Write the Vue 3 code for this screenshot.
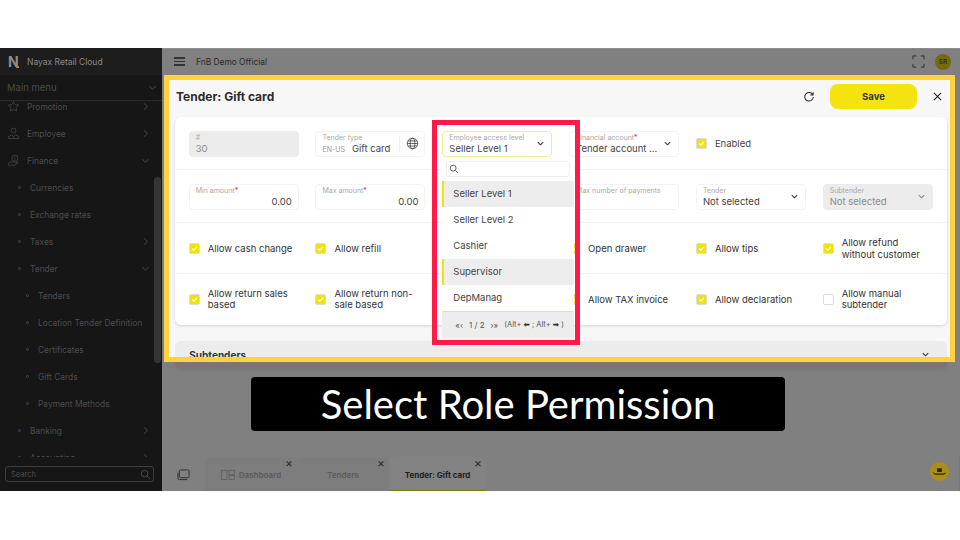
<script setup>
const menu = [
  { label: 'Promotion', level: 0, icon: 'star', arrow: 'right' },
  { label: 'Employee', level: 0, icon: 'person', arrow: 'right' },
  { label: 'Finance', level: 0, icon: 'coin', arrow: 'down' },
  { label: 'Currencies', level: 1 },
  { label: 'Exchange rates', level: 1 },
  { label: 'Taxes', level: 1, arrow: 'right' },
  { label: 'Tender', level: 1, arrow: 'down' },
  { label: 'Tenders', level: 2 },
  { label: 'Location Tender Definition', level: 2 },
  { label: 'Certificates', level: 2 },
  { label: 'Gift Cards', level: 2 },
  { label: 'Payment Methods', level: 2 },
  { label: 'Banking', level: 1, arrow: 'right' },
  { label: 'Accounting', level: 1, arrow: 'right' },
]
const roles = [
  { label: 'Seller Level 1', on: true },
  { label: 'Seller Level 2', on: false },
  { label: 'Cashier', on: false },
  { label: 'Supervisor', on: true },
  { label: 'DepManag', on: false },
]
const rowThree = [
  { label: 'Allow cash change', checked: true },
  { label: 'Allow refill', checked: true },
  null,
  { label: 'Open drawer', checked: true },
  { label: 'Allow tips', checked: true },
  { label: 'Allow refund without customer', checked: true },
]
const rowFour = [
  { label: 'Allow return sales based', checked: true },
  { label: 'Allow return non-sale based', checked: true },
  null,
  { label: 'Allow TAX invoice', checked: true },
  { label: 'Allow declaration', checked: true },
  { label: 'Allow manual subtender', checked: false },
]
</script>

<template>
  <div class="page">
    <div class="app">
      <aside class="sidebar">
        <div class="brand">
          <span class="logo">N<i class="logo-dot"></i></span>
          <span class="brand-name">Nayax Retail Cloud</span>
        </div>
        <div class="menu-head">
          <span>Main menu</span>
          <svg class="chev-side" viewBox="0 0 10 10"><path d="M1.5 3.5 5 7l3.5-3.5" /></svg>
        </div>
        <nav class="menu">
          <div class="menu-list">
            <div v-for="m in menu" :key="m.label" class="menu-item" :class="'lvl' + m.level">
              <svg v-if="m.icon === 'star'" class="menu-icon" viewBox="0 0 14 14"><path d="M7 1.5 8.7 5l3.8.5-2.8 2.6.7 3.8L7 10.1l-3.4 1.8.7-3.8L1.5 5.500 5.300 5z" /></svg>
              <svg v-else-if="m.icon === 'person'" class="menu-icon" viewBox="0 0 14 14"><circle cx="7" cy="3.800" r="2.600" /><path d="M1.500 12.500V10.500L5 8.500l2 2 2-2 3.500 2v2zM7 10.500v2" /></svg>
              <svg v-else-if="m.icon === 'coin'" class="menu-icon" viewBox="0 0 14 14"><circle cx="8.500" cy="4.500" r="3.300" /><path d="M1 10.500 4 8.500h3l2 1 3-1-3 3.500H4l-1.500 1zM8.500 3v3" /></svg>
              <i v-if="m.level > 0" class="menu-dot"></i>
              <span class="menu-label">{{ m.label }}</span>
              <svg v-if="m.arrow === 'right'" class="chev-side end" viewBox="0 0 10 10"><path d="M3.500 1.500 7 5 3.500 8.500" /></svg>
              <svg v-if="m.arrow === 'down'" class="chev-side end" viewBox="0 0 10 10"><path d="M1.500 3.500 5 7l3.500-3.500" /></svg>
            </div>
          </div>
        </nav>
        <div class="side-search">
          <span>Search</span>
          <svg viewBox="0 0 12 12"><circle cx="5" cy="5" r="3.600" /><path d="m7.700 7.700 3.300 3.300" /></svg>
        </div>
        <div class="side-scroll"></div>
      </aside>

      <main class="main">
        <header class="topbar">
          <div class="burger"><i></i><i></i><i></i></div>
          <span class="org">FnB Demo Official</span>
          <svg class="full" viewBox="0 0 14 14"><path d="M1 4.500V1h3.500M9.500 1H13v3.500M13 9.500V13H9.500M4.500 13H1V9.500" /></svg>
          <span class="avatar">SR</span>
        </header>
        <div class="workspace"></div>
        <footer class="tabs">
          <svg class="stack" viewBox="0 0 14 14"><rect x="2.500" y="2" width="10.500" height="8.500" rx="1.500" /><path d="M1 5v6c0 1 .5 1.500 1.500 1.500H11" /></svg>
          <div class="tab">
            <svg class="dash" viewBox="0 0 14 10"><rect x=".5" y=".5" width="5.500" height="9" /><rect x="8" y=".5" width="5.500" height="4" /><rect x="8" y="5.500" width="5.500" height="4" /></svg>
            <span>Dashboard</span><b class="tab-x">×</b>
          </div>
          <div class="tab"><span>Tenders</span><b class="tab-x">×</b></div>
          <div class="tab active"><span>Tender: Gift card</span><b class="tab-x">×</b></div>
          <div class="tabs-end">
            <span class="hat">
              <svg viewBox="0 0 20 20"><path d="M7.500 10.500V6.500h5v4zM3.500 10.500c1 2 3 1.500 4 1.500h5c1 0 3 .5 4-1.500.5 2-2 3-4 3h-5c-2 0-4.500-1-4-3z" /></svg>
            </span>
          </div>
        </footer>

        <div class="modal-tail"></div>
        <section class="modal">
          <div class="modal-head">
            <h1>Tender: Gift card</h1>
            <svg class="refresh" viewBox="0 0 14 14"><path d="M11.500 4.500A5 5 0 1 0 12 7M11.800 1.500v3.200H8.600" /></svg>
            <button class="save" type="button">Save</button>
            <svg class="close" viewBox="0 0 10 10"><path d="m1 1 8 8M9 1 1 9" /></svg>
          </div>

          <div class="card">
            <div class="row r1">
              <div class="field disabled"><label>#</label><div class="val">30</div></div>
              <div class="field">
                <label>Tender type</label>
                <div class="val"><small>EN-US</small>Gift card</div>
                <div class="globe-wrap">
                  <svg class="globe" viewBox="0 0 14 14"><circle cx="7" cy="7" r="5.700" /><ellipse cx="7" cy="7" rx="2.500" ry="5.700" /><path d="M1.300 7h11.400M2 4.300h10M2 9.700h10" /></svg>
                </div>
              </div>
              <div class="field focus">
                <label>Employee access level</label>
                <div class="val">Seller Level 1</div>
                <svg class="chev" viewBox="0 0 10 10"><path d="M2 3.500 5 6.500l3-3" /></svg>
                <div class="dropdown">
                  <div class="dd-search">
                    <svg viewBox="0 0 12 12"><circle cx="5" cy="5" r="3.500" /><path d="m7.600 7.600 3.400 3.400" /></svg>
                  </div>
                  <ul class="dd-list">
                    <li v-for="r in roles" :key="r.label" :class="{ on: r.on }">{{ r.label }}</li>
                  </ul>
                  <div class="dd-foot">
                    <span>«‹</span><span>1 / 2</span><span>›»</span><span class="keys">(Alt+ <em>⬅</em> ; Alt+ <em>➡</em> )</span>
                  </div>
                </div>
              </div>
              <div class="field">
                <label>Financial account<i class="req">*</i></label>
                <div class="val ell">Tender account ...</div>
                <svg class="chev" viewBox="0 0 10 10"><path d="M2 3.500 5 6.500l3-3" /></svg>
              </div>
              <label class="check">
                <span class="box on"><svg viewBox="0 0 10 10"><path d="m2.500 5 1.800 1.800 3.300-3.500" /></svg></span>
                <span class="enabled">Enabled</span>
              </label>
            </div>

            <div class="row r2">
              <div class="field"><label>Min amount<i class="req">*</i></label><div class="val num">0.00</div></div>
              <div class="field"><label>Max amount<i class="req">*</i></label><div class="val num">0.00</div></div>
              <div></div>
              <div class="field"><label>Max number of payments</label></div>
              <div class="field">
                <label>Tender</label><div class="val">Not selected</div>
                <svg class="chev" viewBox="0 0 10 10"><path d="M2 3.500 5 6.500l3-3" /></svg>
              </div>
              <div class="field disabled">
                <label>Subtender</label><div class="val">Not selected</div>
                <svg class="chev" viewBox="0 0 10 10"><path d="M2 3.500 5 6.500l3-3" /></svg>
              </div>
            </div>

            <div class="row r3">
              <template v-for="(c, i) in rowThree" :key="i">
                <label v-if="c" class="check">
                  <span class="box" :class="{ on: c.checked }"><svg v-if="c.checked" viewBox="0 0 10 10"><path d="m2.500 5 1.800 1.800 3.300-3.500" /></svg></span>
                  <span>{{ c.label }}</span>
                </label>
                <div v-else></div>
              </template>
            </div>

            <div class="row r4">
              <template v-for="(c, i) in rowFour" :key="i">
                <label v-if="c" class="check">
                  <span class="box" :class="{ on: c.checked }"><svg v-if="c.checked" viewBox="0 0 10 10"><path d="m2.500 5 1.800 1.800 3.300-3.500" /></svg></span>
                  <span>{{ c.label }}</span>
                </label>
                <div v-else></div>
              </template>
            </div>
          </div>

          <div class="sub">
            <span>Subtenders</span>
            <svg class="chev" viewBox="0 0 10 10"><path d="M2 3.500 5 6.500l3-3" /></svg>
          </div>
        </section>
      </main>
    </div>

    <div class="red-frame"></div>
    <div class="caption">Select Role Permission</div>
  </div>
</template>

<style>
html, body { margin: 0; background: #fff; }
</style>

<style scoped>
.page {
  position: relative;
  width: 960px;
  height: 540px;
  padding-top: 48px;
  box-sizing: border-box;
  background: #fff;
  overflow: hidden;
  font-family: Inter, "Noto Sans", sans-serif;
}
.app { display: flex; height: 443px; }

/* sidebar */
.sidebar {
  position: relative;
  width: 162px;
  flex: none;
  display: flex;
  flex-direction: column;
  background: #161616;
  color: #505050;
}
.brand {
  height: 27px;
  display: flex;
  align-items: center;
  gap: 7px;
  padding: 0 0 0 8px;
  background: #1d1d1d;
}
.logo {
  position: relative;
  width: 12px;
  color: #8e8e8e;
  font-weight: 700;
  font-size: 14px;
  line-height: 1;
}
.logo-dot {
  position: absolute;
  left: 8px;
  bottom: 1px;
  width: 3px;
  height: 2px;
  background: #9a8c10;
}
.brand-name { font-size: 8.500px; color: #8a8a8a; }
.menu-head {
  height: 26px;
  display: flex;
  align-items: center;
  justify-content: space-between;
  padding: 0 5px 0 7px;
  font-size: 9.500px;
  color: #4a4a4a;
  border-bottom: 1px solid #2a2a2a;
  box-sizing: border-box;
}
.chev-side { width: 9px; height: 9px; fill: none; stroke: #4a4a4a; stroke-width: 1.100; }
.menu { height: 356px; overflow: hidden; flex: none; }
.menu-list { margin-top: -8px; }
.menu-item {
  height: 27px;
  display: flex;
  align-items: center;
  font-size: 8.400px;
  color: #4c4c4c;
  padding-right: 12px;
}
.menu-label { flex: 1; white-space: nowrap; }
.lvl0 { padding-left: 7px; }
.lvl1 { padding-left: 18px; }
.lvl2 { padding-left: 26px; }
.menu-icon { width: 13px; height: 13px; margin-right: 7px; fill: none; stroke: #444; stroke-width: .9; }
.menu-dot {
  width: 3px;
  height: 3px;
  border: 1px solid #484848;
  border-radius: 50%;
  margin-right: 9px;
  box-sizing: border-box;
}
.side-search {
  margin: 9px 8px 0 5px;
  height: 16px;
  border: 1px solid #3d3d3d;
  border-radius: 3px;
  display: flex;
  align-items: center;
  justify-content: space-between;
  padding: 0 2px 0 5px;
  font-size: 7.500px;
  color: #4c4c4c;
  box-sizing: border-box;
}
.side-search svg { width: 11px; height: 11px; fill: none; stroke: #4c4c4c; stroke-width: 1; }
.side-scroll {
  position: absolute;
  left: 154px;
  top: 129px;
  width: 7px;
  height: 186px;
  background: #343434;
  border-radius: 4px;
}

/* main */
.main {
  position: relative;
  flex: 1;
  display: flex;
  flex-direction: column;
  background: #808080;
}
.topbar {
  height: 27px;
  display: flex;
  align-items: center;
  padding: 0 9px 1px 12px;
  color: #2a2a2a;
  font-size: 8.400px;
  border-top: 1px solid #8c8c8c;
  box-sizing: border-box;
}
.burger { width: 11px; display: flex; flex-direction: column; gap: 2px; margin-right: 11px; }
.burger i { height: 1.500px; background: #333; display: block; }
.org { flex: 1; }
.full { width: 13px; height: 13px; fill: none; stroke: #2a2a2a; stroke-width: 1; margin-right: 10px; }
.avatar {
  width: 16px;
  height: 16px;
  border-radius: 50%;
  background: #746a0c;
  color: #2c2a10;
  font-size: 6.500px;
  display: flex;
  align-items: center;
  justify-content: center;
  font-weight: 500;
}
.workspace { flex: 1; }
.tabs {
  height: 34px;
  display: flex;
  align-items: stretch;
  padding-left: 15px;
  font-size: 8px;
  font-weight: 700;
  color: #5d5d5d;
}
.stack {
  width: 13px;
  height: 13px;
  align-self: center;
  fill: none;
  stroke: #2c2c2c;
  stroke-width: 1;
  margin-right: 15px;
}
.tab {
  position: relative;
  width: 92px;
  display: flex;
  align-items: center;
  justify-content: center;
  gap: 4px;
  background: #7d7d7d;
  padding-top: 2px;
  box-sizing: border-box;
  border-radius: 5px 5px 0 0;
}
.tab.active {
  width: 97px;
  background: #828282;
  color: #1e1e1e;
  border-bottom: 1px solid #85790d;
}
.dash { width: 14px; height: 10px; fill: none; stroke: #5f5f5f; stroke-width: .8; }
.tab-x {
  position: absolute;
  right: 4px;
  top: 0;
  font-size: 12px;
  line-height: 12px;
  font-weight: 400;
  color: #2c2c2c;
}
.tabs-end {
  flex: 1;
  display: flex;
  align-items: center;
  justify-content: flex-end;
  padding: 0 11px 6px 0;
  box-shadow: inset -44px 0 0 -43px #787878;
}
.hat {
  width: 19px;
  height: 19px;
  border-radius: 50%;
  background: #a88e1a;
  display: flex;
}
.hat svg { width: 19px; height: 19px; fill: #30200c; }

/* dialog */
.modal-tail {
  position: absolute;
  left: 13px;
  top: 300px;
  width: 772px;
  height: 20px;
  border-radius: 6px;
  background: #777;
  box-shadow: 0 2px 4px rgba(0, 0, 0, .08);
}
.modal {
  position: absolute;
  left: 2px;
  top: 27px;
  width: 791px;
  height: 286.500px;
  box-sizing: border-box;
  border: 5px solid #ffd23f;
  background: #f7f7f7;
  overflow: hidden;
  color: #333;
}
.modal-head {
  height: 33px;
  margin-bottom: 4px;
  display: flex;
  align-items: center;
  padding: 0 6px 0 7px;
  box-sizing: border-box;
}
.modal-head h1 { flex: 1; margin: 0; font-size: 12px; font-weight: 700; color: #2b2b2b; }
.refresh { width: 12px; height: 12px; fill: none; stroke: #2b2b2b; stroke-width: 1.200; margin-right: 15px; }
.save {
  width: 87px;
  height: 25px;
  border: 0;
  border-radius: 8px;
  background: #f5e310;
  font: 700 9.500px Inter, sans-serif;
  color: #333;
  padding: 0;
  margin-right: 16px;
}
.close { width: 9px; height: 9px; fill: none; stroke: #222; stroke-width: 1.200; margin-right: 2px; }
.card {
  width: 771.400px;
  margin-left: 6.300px;
  background: #fff;
  border-radius: 6px;
  box-shadow: 0 1px 3px rgba(0, 0, 0, .15);
}
.row {
  display: grid;
  grid-template-columns: repeat(6, 110px);
  column-gap: 16.800px;
  align-items: center;
  padding-left: 13.400px;
  box-sizing: border-box;
  border-bottom: 1px solid #f3f3f3;
}
.r1 { height: 53px; padding-top: 1.500px; }
.r2 { height: 53px; padding-top: 1.500px; }
.r3 { height: 51px; padding-top: 1.500px; }
.r4 { height: 50.500px; border-bottom: 0; }
.field {
  position: relative;
  height: 26px;
  box-sizing: border-box;
  border: 1px solid #f3f3f3;
  border-radius: 4px;
  padding: 1.500px 6px 0;
}
.field label {
  display: block;
  font-size: 7px;
  line-height: 9px;
  color: #a9a9a9;
  white-space: nowrap;
}
.val { font-size: 9.500px; line-height: 13px; color: #444; white-space: nowrap; }
.val small { font-size: 7px; color: #999; margin-right: 7px; }
.val.num { text-align: right; }
.req { color: #e8213f; font-style: normal; }
.disabled { background: #ececec; border-color: #ececec; }
.disabled .val { color: #8b8b8b; }
.focus { border-color: #f6ec8f; }
.chev {
  position: absolute;
  right: 6px;
  top: 7px;
  width: 9px;
  height: 9px;
  fill: none;
  stroke: #333;
  stroke-width: 1.200;
}
.disabled .chev { stroke: #888; }
.globe-wrap {
  position: absolute;
  right: 0;
  top: 4px;
  width: 24px;
  height: 16px;
  border-left: 1px solid #eee;
  display: flex;
  align-items: center;
  justify-content: center;
}
.globe { width: 13px; height: 13px; fill: none; stroke: #333; stroke-width: .8; }
.check {
  display: flex;
  align-items: center;
  gap: 8px;
  font-size: 9.500px;
  line-height: 11.500px;
  color: #333;
}
.box {
  flex: none;
  width: 11px;
  height: 11px;
  box-sizing: border-box;
  border: 1px solid #ddd;
  border-radius: 2px;
  background: #fff;
  display: flex;
}
.box.on { background: #f2e20b; }
.box svg { width: 9px; height: 9px; fill: none; stroke: #fff; stroke-width: 1.200; }
.enabled { color: #444; }

/* dropdown */
.dropdown {
  position: absolute;
  z-index: 5;
  left: -1px;
  top: 25px;
  width: 132px;
  height: 181px;
  background: #fff;
  display: flex;
  flex-direction: column;
}
.dd-search {
  height: 16px;
  margin: 4px 4px 4px;
  border: 1px solid #eee;
  border-radius: 3px;
  display: flex;
  align-items: center;
  padding-left: 2px;
  box-sizing: border-box;
}
.dd-search svg { width: 10px; height: 10px; fill: none; stroke: #555; stroke-width: 1.100; }
.dd-list { list-style: none; margin: 0; padding: 0; }
.dd-list li {
  height: 26px;
  padding-left: 11px;
  display: flex;
  align-items: center;
  font-size: 9.500px;
  color: #444;
  box-sizing: border-box;
}
.dd-list li.on { background: #ededed; border-left: 2px solid #f2e20b; padding-left: 9px; }
.dd-foot {
  flex: 1;
  background: #ededed;
  border-top: 1px solid #f2e674;
  display: flex;
  align-items: center;
  gap: 6px;
  padding-left: 13px;
  font-size: 8px;
  color: #555;
  white-space: nowrap;
}
.keys { font-size: 7.500px; }
.keys em { font-style: normal; font-family: "DejaVu Sans", sans-serif; font-weight: 700; color: #333; }
.sub {
  position: relative;
  margin: 16px 3px 0 6.300px;
  height: 60px;
  padding: 8px 14px;
  box-sizing: border-box;
  background: #ececec;
  border-radius: 6px;
  font-size: 10px;
  font-weight: 700;
  color: #333;
}
.sub .chev { right: 17px; top: 9px; }

/* annotations */
.red-frame {
  position: absolute;
  left: 432px;
  top: 120px;
  width: 148px;
  height: 225px;
  box-sizing: border-box;
  border: 5px solid #ff1a47;
}
.caption {
  position: absolute;
  left: 251px;
  top: 377px;
  width: 534px;
  height: 54px;
  border-radius: 4px;
  background: #000;
  color: #fff;
  font-family: Lato, sans-serif;
  font-size: 40px;
  line-height: 54px;
  text-align: center;
}
</style>
